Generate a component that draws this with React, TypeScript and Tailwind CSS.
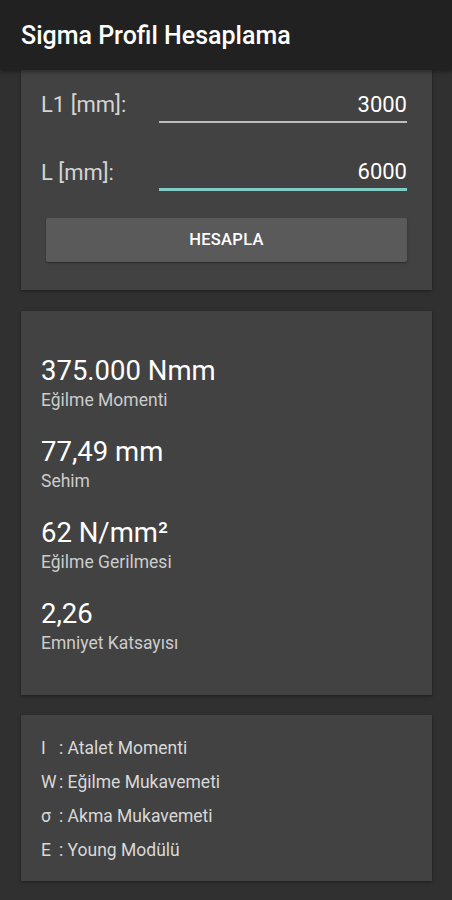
import React from "react";

const results = [
  { value: "375.000 Nmm", label: "Eğilme Momenti" },
  { value: "77,49 mm", label: "Sehim" },
  { value: "62 N/mm²", label: "Eğilme Gerilmesi" },
  { value: "2,26", label: "Emniyet Katsayısı" },
];

const legend = [
  { sym: "I", text: "Atalet Momenti" },
  { sym: "W", text: "Eğilme Mukavemeti" },
  { sym: "σ", text: "Akma Mukavemeti" },
  { sym: "E", text: "Young Modülü" },
];

export default function App() {
  return (
    <div
      className="w-[452px] h-[900px] bg-[#303030] overflow-hidden flex flex-col relative"
      style={{ fontFamily: "Roboto, 'Noto Sans', sans-serif" }}
    >
      <div className="h-[70px] shrink-0 bg-[#212121] pl-[21px] pt-[21px] relative z-10 shadow-[0_2px_4px_rgba(0,0,0,0.35)]">
        <div className="text-[25px] leading-[30px] font-medium text-white">Sigma Profil Hesaplama</div>
      </div>

      <div className="mx-[21px] w-[411px] bg-[#424242] px-[20px] pt-[22px] pb-[28px] shadow-[0_1px_3px_rgba(0,0,0,0.4)]">
        <div className="flex items-end">
          <div className="w-[118px] text-[22px] leading-[26px] text-[#d4d4d4] pb-[5px]">L1 [mm]:</div>
          <div className="flex-1 mr-[5px] border-b-2 border-[#bdbdbd] text-right text-[22px] leading-[26px] text-white pb-[3px]">3000</div>
        </div>
        <div className="flex items-end mt-[36px]">
          <div className="w-[118px] text-[22px] leading-[26px] text-[#d4d4d4] pb-[5px]">L [mm]:</div>
          <div className="flex-1 mr-[5px] border-b-[3px] border-[#80cbc4] text-right text-[22px] leading-[26px] text-white pb-[3px]">6000</div>
        </div>
        <div className="mt-[27px] mx-[5px] h-[44px] bg-[#5a5a5a] rounded-[2px] shadow-[0_1px_2px_rgba(0,0,0,0.4)] flex items-center justify-center">
          <span className="text-[16.5px] font-medium tracking-[0.3px] text-white">HESAPLA</span>
        </div>
      </div>

      <div className="mt-[21px] mx-[21px] w-[411px] bg-[#424242] px-[20px] pt-[43px] pb-[42px] flex flex-col gap-[25px] shadow-[0_1px_3px_rgba(0,0,0,0.4)]">
        {results.map((r) => (
          <div key={r.label} className="flex flex-col gap-[3px]">
            <div className="text-[27.5px] leading-[33px] text-white">{r.value}</div>
            <div className="text-[17.5px] leading-[20px] text-[#cccccc]">{r.label}</div>
          </div>
        ))}
      </div>

      <div className="mt-[20px] mx-[21px] w-[411px] bg-[#424242] px-[20px] pt-[23px] pb-[21px] flex flex-col gap-[14px] shadow-[0_1px_3px_rgba(0,0,0,0.4)]">
        {legend.map((l) => (
          <div key={l.sym} className="flex text-[17.5px] leading-[20px] text-[#d8d8d8]">
            <span className="w-[18px]">{l.sym}</span>
            <span>:&nbsp;{l.text}</span>
          </div>
        ))}
      </div>
    </div>
  );
}
